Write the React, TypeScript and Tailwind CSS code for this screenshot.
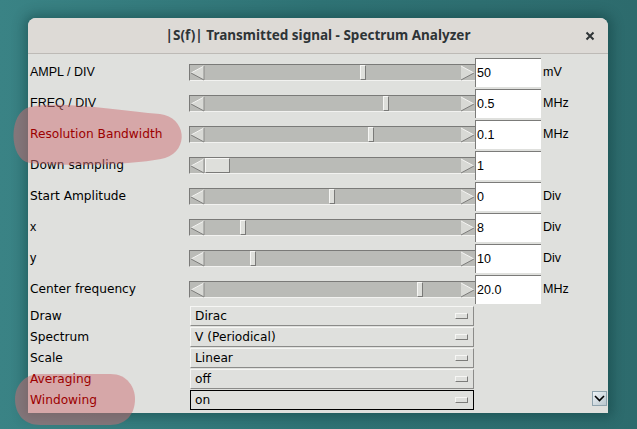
import React from 'react'

const sliders = [
  { label: 'AMPL / DIV', pos: 171, value: '50', unit: 'mV', helv: true },
  { label: 'FREQ / DIV', pos: 194, value: '0.5', unit: 'MHz', helv: true },
  { label: 'Resolution Bandwidth', pos: 179, value: '0.1', unit: 'MHz', red: true },
  { label: 'Down sampling', pos: 16, value: '1', unit: '', wide: true },
  { label: 'Start Amplitude', pos: 140, value: '0', unit: 'Div' },
  { label: 'x', pos: 51, value: '8', unit: 'Div', helv: true },
  { label: 'y', pos: 61, value: '10', unit: 'Div', helv: true },
  { label: 'Center frequency', pos: 228, value: '20.0', unit: 'MHz' },
]

const menus = [
  { label: 'Draw', value: 'Dirac' },
  { label: 'Spectrum', value: 'V (Periodical)' },
  { label: 'Scale', value: 'Linear' },
  { label: 'Averaging', value: 'off', red: true },
  { label: 'Windowing', value: 'on', red: true, focus: true },
]

function Slider({ pos, wide }: { pos: number; wide?: boolean }) {
  return (
    <div className="relative flex w-[286px] h-[17px] bg-[#babbb7] border-t border-l border-[#7a7a78] border-b border-b-[#f2f2f0]">
      <svg width="15" height="16" viewBox="0 0 15 16" className="shrink-0">
        <polygon points="14,1 1,8 14,15" fill="#d8d9d5" />
        <line x1="1" y1="8" x2="14" y2="1" stroke="#f4f4f2" />
        <line x1="1" y1="8" x2="14" y2="15" stroke="#7c7c7a" />
        <line x1="14" y1="1" x2="14" y2="15" stroke="#8a8a88" />
      </svg>
      <div className="flex-1" />
      <svg width="15" height="16" viewBox="0 0 15 16" className="shrink-0">
        <polygon points="1,1 14,8 1,15" fill="#d8d9d5" />
        <line x1="1" y1="1" x2="14" y2="8" stroke="#f4f4f2" />
        <line x1="14" y1="8" x2="1" y2="15" stroke="#7c7c7a" />
      </svg>
      <div
        className="absolute top-[0px] h-[15px] bg-[#dedfdb] border-t border-l border-[#f6f6f4] border-r border-b border-r-[#7a7a78] border-b-[#7a7a78]"
        style={{ left: pos - 1, width: wide ? 25 : 6 }}
      />
    </div>
  )
}

export default function App() {
  const dejavu = "font-['DejaVu_Sans',sans-serif] text-[12.2px]"
  const helv = "font-['Liberation_Sans',Arial,sans-serif] text-[12.5px]"

  return (
    <div className="relative w-[637px] h-[429px] overflow-hidden bg-gradient-to-r from-[#3a8385] via-[#2f7375] to-[#2d6b6d] pt-[18px] pl-[28px]">
      <div className="w-[580px] h-[395px] rounded-t-[8px] bg-[#dfe0dd] shadow-[0_0_12px_4px_rgba(0,40,40,0.35)] flex flex-col">
        <div className="relative h-[36px] shrink-0 rounded-t-[8px] bg-[#dddad6] border-b border-[#bdbab6] flex items-center justify-center">
          <span className="font-['Noto_Sans',sans-serif] font-bold text-[13.5px] text-[#2e3436]">
            |S(f)| Transmitted signal - Spectrum Analyzer
          </span>
          <svg width="10" height="10" viewBox="0 0 10 10" className="absolute right-[13px] top-[13px]">
            <path d="M1.5 1.5 L8.5 8.5 M8.5 1.5 L1.5 8.5" stroke="#2e3436" strokeWidth="2" />
          </svg>
        </div>

        <div className="pt-[4px] flex flex-col gap-[2px]">
          {sliders.map((s) => (
            <div key={s.label} className="flex items-center h-[29px]">
              <div className={`w-[161px] pl-[2px] ${s.helv ? helv : dejavu} ${s.red ? 'relative z-10 text-[#9c0000]' : 'text-black'}`}>
                {s.label}
              </div>
              <Slider pos={s.pos} wide={s.wide} />
              <div className={`w-[66px] h-[29px] bg-white border-t border-l border-[#7b7b79] pl-[1px] flex items-center text-black ${helv}`}>
                {s.value}
              </div>
              <div className={`pl-[2px] text-black ${helv}`}>{s.unit}</div>
            </div>
          ))}
        </div>

        <div className="pt-[2px] flex flex-col gap-[1px]">
          {menus.map((m) => (
            <div key={m.label} className="flex h-[20px]">
              <div className={`w-[162px] pl-[2px] flex items-center ${dejavu} ${m.red ? 'relative z-10 text-[#9c0000]' : 'text-black'}`}>
                {m.label}
              </div>
              <div
                className={`w-[284px] h-[20px] flex items-center justify-between pl-[4px] pr-[5px] bg-[#dfe0dd] text-black border ${dejavu} ${
                  m.focus ? 'border-black' : 'border-t-[#f6f6f4] border-l-[#f6f6f4] border-r-[#8b8b89] border-b-[#8b8b89]'
                }`}
              >
                <span>{m.value}</span>
                <div className="w-[13px] h-[6px] border border-t-[#f6f6f4] border-l-[#f6f6f4] border-r-[#7c7c7a] border-b-[#7c7c7a]" />
              </div>
              {m.focus && (
                <div className="ml-auto mr-[1px] mt-[1px] w-[15px] h-[15px] border border-[#8fa3ad] bg-gradient-to-br from-[#eef3f6] to-[#b9c6cd] flex items-center justify-center">
                  <svg width="11" height="7" viewBox="0 0 11 7">
                    <path d="M1 1 L5.5 5.5 L10 1" stroke="#000" strokeWidth="1.6" fill="none" />
                  </svg>
                </div>
              )}
            </div>
          ))}
        </div>
      </div>

      <svg className="absolute left-0 top-0 pointer-events-none" width="637" height="429" viewBox="0 0 637 429">
        <path
          d="M30 107 C60 100 120 111 160 114 C186 117 190 150 165 158 C130 166 60 166 30 163 C8 160 8 111 30 107 Z"
          fill="rgba(205,110,115,0.5)"
        />
        <path d="M40 374 L110 374 C128 374 135 388 135 399 C135 414 126 425 110 425 L40 425 C24 425 15 414 15 399 C15 386 24 374 40 374 Z" fill="rgba(205,110,115,0.5)" />
      </svg>
    </div>
  )
}
